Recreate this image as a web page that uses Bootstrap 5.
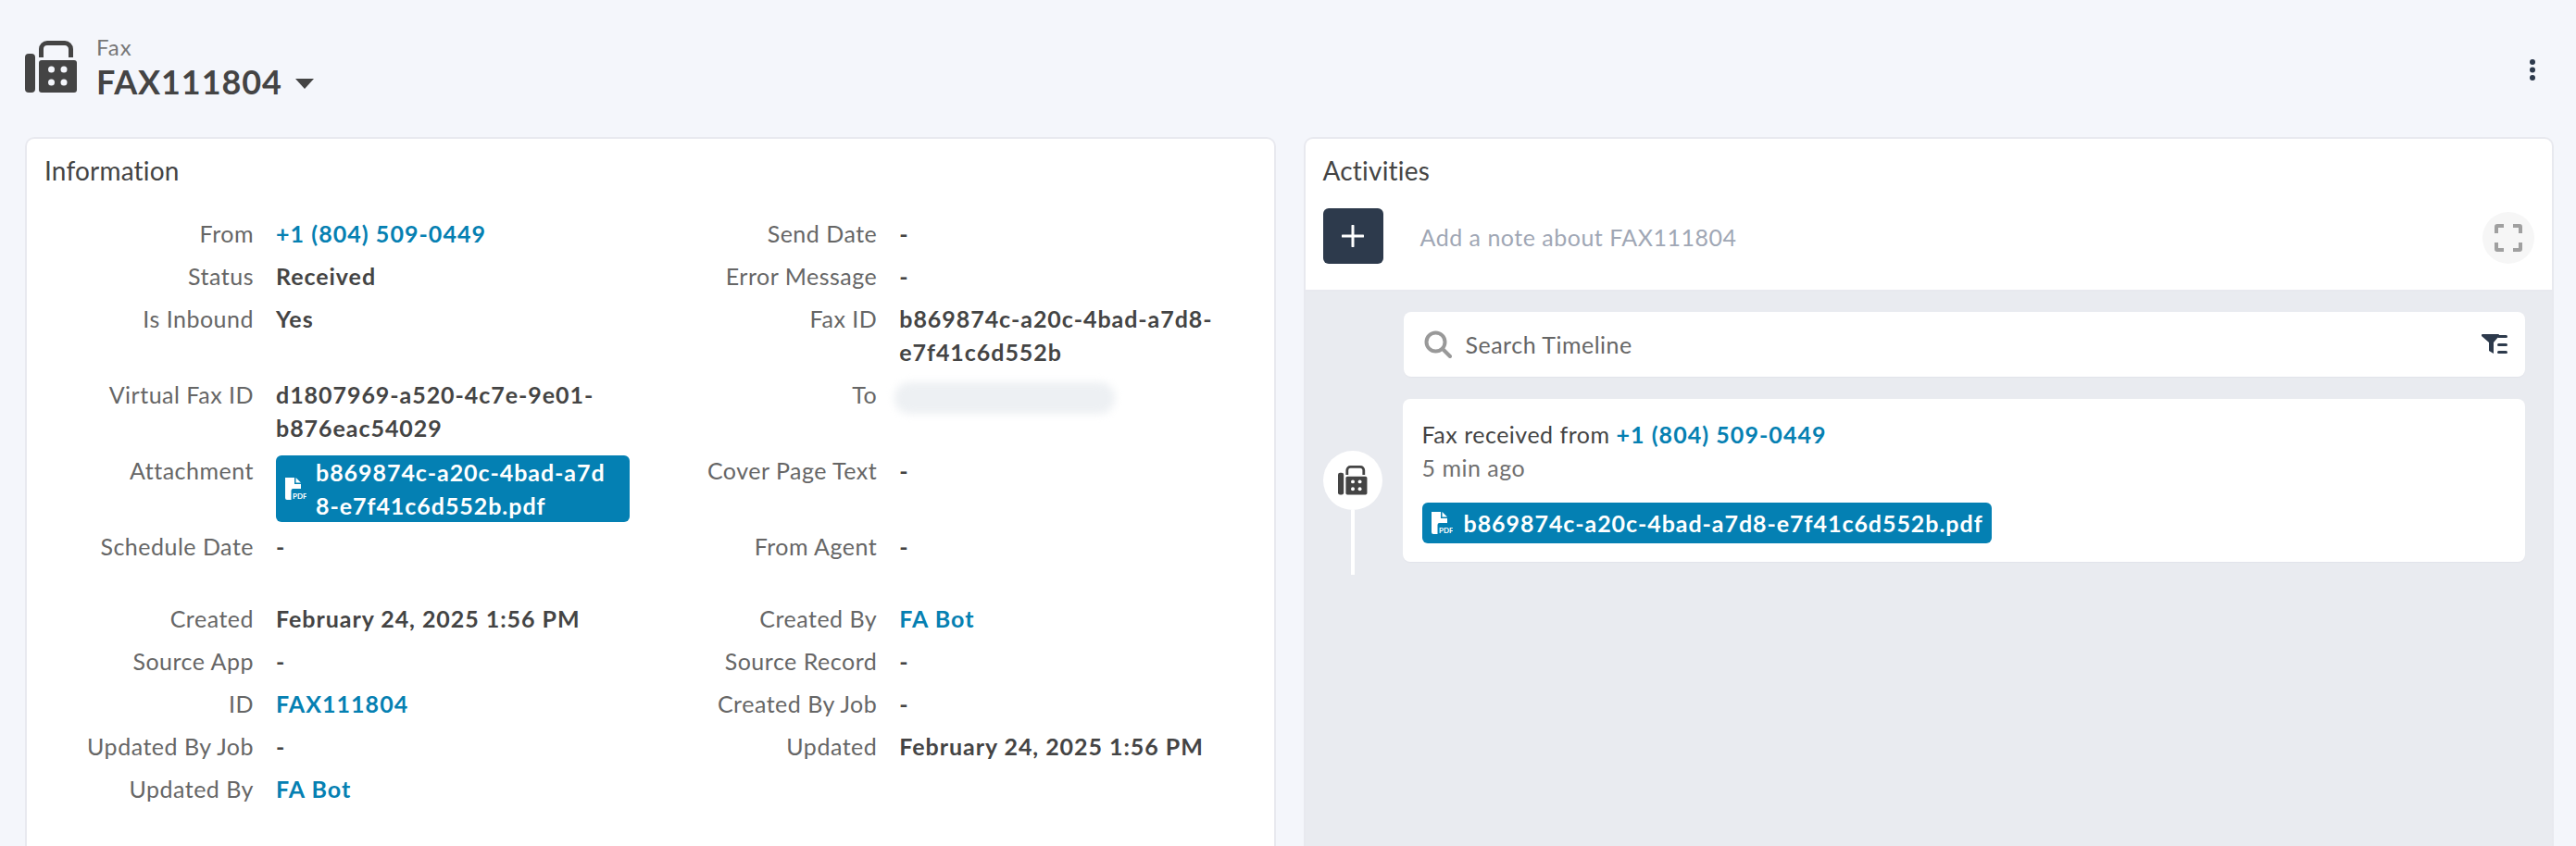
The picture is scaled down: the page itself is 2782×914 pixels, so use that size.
<!DOCTYPE html>
<html lang="en">
<head>
    <meta charset="UTF-8">
    <meta name="viewport" content="width=device-width, initial-scale=1.0">
    <title>FAX111804</title>
    <link href="https://cdn.jsdelivr.net/npm/bootstrap@5.3.0/dist/css/bootstrap.min.css" rel="stylesheet">
    <style>
        html, body { height: 914px; overflow: hidden; }
        body { background: #f4f6fb; color: #444; font-family: Lato, "Liberation Sans", sans-serif; font-size: 25px; line-height: 36px; letter-spacing: .5px; }
        a { color: #0580b2; text-decoration: none; font-weight: 700; letter-spacing: 1.05px; }
        .page-head { height: 148px; padding: 44px 43px 0 27px; }
        .head-icon { width: 57px; height: 57px; flex: none; }
        .head-text { margin-left: 20px; margin-top: -11px; }
        .head-type { font-size: 24px; line-height: 36px; color: #777; letter-spacing: 1px; }
        .head-name { font-size: 36px; line-height: 44px; font-weight: 700; color: #444; letter-spacing: .9px; margin-top: -3px; }
        .head-caret { width: 0; height: 0; border-left: 10px solid transparent; border-right: 10px solid transparent; border-top: 11px solid #444; margin-left: 14px; margin-top: 4px; }
        .kebab { width: 8px; margin-top: 19px; }
        .panels { padding: 0 24px 0 27px; gap: 30px; height: 766px; }
        .panel { flex: 1 1 0; min-width: 0; background: #fff; border: 2px solid #e8e9ef; border-bottom: 0; border-radius: 10px 10px 0 0; overflow: hidden; }
        .panel-title { font-size: 28px; line-height: 36px; color: #444; font-weight: 400; letter-spacing: .2px; }
        .info-head { padding: 16px 0 0 19px; height: 84px; }
        .info-row { margin-bottom: 10px; }
        .info-section { padding-bottom: 32px; }
        .info-label { width: 245px; flex: none; text-align: right; color: #666; }
        .info-value { margin-left: 24px; width: 383px; font-weight: 700; letter-spacing: .95px; overflow-wrap: anywhere; }
        .file-chip { background: #0480b3; color: #fff; border-radius: 6px; font-weight: 700; letter-spacing: .95px; }
        .file-chip svg { flex: none; }
        .chip-big { padding: 0 14px 0 9px; gap: 10px; width: 382px; word-break: break-all; margin: 2px 0 -2px; }
        .chip-small { padding: 0 9px; gap: 12px; height: 44px; line-height: 44px; margin-top: 20px; }
        .blur-box { width: 238px; height: 34px; margin: 5px 0 0 -5px; background: #edf0f3; border-radius: 16px; filter: blur(4px); }
        .note-area { height: 165px; padding: 16px 19px 0 19px; border-bottom: 2px solid #e8e9ef; flex: none; }
        .activities-title { margin-bottom: 23px; }
        .add-btn { width: 65px; height: 60px; background: #2d3a4c; border-radius: 6px; border: 0; padding: 0; }
        .note-text { color: #a0a7b5; margin-left: 40px; margin-top: 2px; }
        .expand-btn { width: 56px; height: 56px; border-radius: 50%; background: #f6f6f6; margin-top: 4px; }
        .timeline { background: #e9ebf0; padding: 22px 29px 0 19px; }
        .rail { width: 65px; flex: none; }
        .rail-dot { width: 64px; height: 64px; border-radius: 50%; background: #fff; margin-top: 150px; }
        .rail-line { width: 4px; height: 70px; background: #fff; }
        .search-box { background: #fff; border-radius: 8px; height: 70px; margin-left: 22px; padding: 0 18px 0 22px; box-shadow: 0 1px 1px #e2e4ea; }
        .search-text { color: #666; margin-left: 15px; }
        .event-card { background: #fff; border-radius: 8px; height: 176px; margin-left: 21px; margin-top: 24px; padding: 20px 21px 0; box-shadow: 0 1px 1px #e2e4ea; }
        .event-time { color: #707070; }
        .pdf-label { font-family: Lato, sans-serif; font-size: 8px; line-height: 1; font-weight: 700; letter-spacing: 0; fill: #fff; }
    </style>
</head>
<body>
    <div class="page-head d-flex">
        <svg class="head-icon" viewBox="0 0 57 57">
            <rect x="0" y="14" width="11" height="42" rx="4" fill="#444"/>
            <rect x="15" y="21" width="41" height="35" rx="3" fill="#444"/>
            <path d="M17.5 18V9a6.500 6.500 0 0 1 6.500-6.500h19a6.500 6.500 0 0 1 6.500 6.500v9" fill="none" stroke="#444" stroke-width="5"/>
            <circle cx="28.500" cy="31" r="3.500" fill="#f4f6fb"/><circle cx="42" cy="31" r="3.500" fill="#f4f6fb"/>
            <circle cx="28.500" cy="45" r="3.500" fill="#f4f6fb"/><circle cx="42" cy="45" r="3.500" fill="#f4f6fb"/>
        </svg>
        <div class="head-text">
            <div class="head-type">Fax</div>
            <div class="head-name d-flex align-items-center">FAX111804<span class="head-caret"></span></div>
        </div>
        <svg class="kebab ms-auto" height="26" viewBox="0 0 8 26" fill="#2d3a4c"><circle cx="4" cy="4" r="3"/><circle cx="4" cy="12.500" r="3"/><circle cx="4" cy="21" r="3"/></svg>
    </div>

    <div class="panels d-flex">
        <div class="panel">
            <div class="info-head"><div class="panel-title">Information</div></div>
            <div class="info-section">
                <div class="row g-0 info-row">
                    <div class="col-6 d-flex"><div class="info-label">From</div><div class="info-value"><a href="#">+1 (804) 509-0449</a></div></div>
                    <div class="col-6 d-flex"><div class="info-label">Send Date</div><div class="info-value">-</div></div>
                </div>
                <div class="row g-0 info-row">
                    <div class="col-6 d-flex"><div class="info-label">Status</div><div class="info-value">Received</div></div>
                    <div class="col-6 d-flex"><div class="info-label">Error Message</div><div class="info-value">-</div></div>
                </div>
                <div class="row g-0 info-row">
                    <div class="col-6 d-flex"><div class="info-label">Is Inbound</div><div class="info-value">Yes</div></div>
                    <div class="col-6 d-flex"><div class="info-label">Fax ID</div><div class="info-value">b869874c-a20c-4bad-a7d8-e7f41c6d552b</div></div>
                </div>
                <div class="row g-0 info-row">
                    <div class="col-6 d-flex"><div class="info-label">Virtual Fax ID</div><div class="info-value">d1807969-a520-4c7e-9e01-b876eac54029</div></div>
                    <div class="col-6 d-flex"><div class="info-label">To</div><div class="info-value"><div class="blur-box"></div></div></div>
                </div>
                <div class="row g-0 info-row">
                    <div class="col-6 d-flex"><div class="info-label">Attachment</div><div class="info-value">
                        <div class="file-chip chip-big d-flex align-items-center">
                            <svg width="24" height="25" viewBox="0 0 24 25"><path d="M1 0h10v7h7v5H9.500a2 2 0 0 0-2 2v10H3a2 2 0 0 1-2-2z" fill="#fff"/><path d="M12.500 0l5.500 5.500h-5.500z" fill="#fff"/><text class="pdf-label" x="9" y="23">PDF</text></svg>
                            <span>b869874c-a20c-4bad-a7d8-e7f41c6d552b.pdf</span>
                        </div>
                    </div></div>
                    <div class="col-6 d-flex"><div class="info-label">Cover Page Text</div><div class="info-value">-</div></div>
                </div>
                <div class="row g-0 info-row">
                    <div class="col-6 d-flex"><div class="info-label">Schedule Date</div><div class="info-value">-</div></div>
                    <div class="col-6 d-flex"><div class="info-label">From Agent</div><div class="info-value">-</div></div>
                </div>
            </div>
            <div>
                <div class="row g-0 info-row">
                    <div class="col-6 d-flex"><div class="info-label">Created</div><div class="info-value">February 24, 2025 1:56 PM</div></div>
                    <div class="col-6 d-flex"><div class="info-label">Created By</div><div class="info-value"><a href="#">FA Bot</a></div></div>
                </div>
                <div class="row g-0 info-row">
                    <div class="col-6 d-flex"><div class="info-label">Source App</div><div class="info-value">-</div></div>
                    <div class="col-6 d-flex"><div class="info-label">Source Record</div><div class="info-value">-</div></div>
                </div>
                <div class="row g-0 info-row">
                    <div class="col-6 d-flex"><div class="info-label">ID</div><div class="info-value"><a href="#">FAX111804</a></div></div>
                    <div class="col-6 d-flex"><div class="info-label">Created By Job</div><div class="info-value">-</div></div>
                </div>
                <div class="row g-0 info-row">
                    <div class="col-6 d-flex"><div class="info-label">Updated By Job</div><div class="info-value">-</div></div>
                    <div class="col-6 d-flex"><div class="info-label">Updated</div><div class="info-value">February 24, 2025 1:56 PM</div></div>
                </div>
                <div class="row g-0 info-row">
                    <div class="col-6 d-flex"><div class="info-label">Updated By</div><div class="info-value"><a href="#">FA Bot</a></div></div>
                </div>
            </div>
        </div>

        <div class="panel d-flex flex-column">
            <div class="note-area">
                <div class="panel-title activities-title">Activities</div>
                <div class="d-flex align-items-center">
                    <button class="add-btn d-flex align-items-center justify-content-center" type="button">
                        <svg width="24" height="24" viewBox="0 0 24 24"><path d="M12 1v22M1 12h22" stroke="#fff" stroke-width="3" stroke-linecap="round"/></svg>
                    </button>
                    <div class="note-text">Add a note about FAX111804</div>
                    <div class="expand-btn ms-auto d-flex align-items-center justify-content-center">
                        <svg width="30" height="30" viewBox="0 0 30 30" fill="none" stroke="#a0a0a0" stroke-width="4"><path d="M2 10V3a1 1 0 0 1 1-1h7M20 2h7a1 1 0 0 1 1 1v7M28 20v7a1 1 0 0 1-1 1h-7M10 28H3a1 1 0 0 1-1-1v-7"/></svg>
                    </div>
                </div>
            </div>
            <div class="timeline flex-grow-1 d-flex">
                <div class="rail d-flex flex-column align-items-center">
                    <div class="rail-dot d-flex align-items-center justify-content-center flex-shrink-0">
                        <svg width="32" height="32" viewBox="0 0 57 57">
                            <rect x="0" y="14" width="11" height="42" rx="4" fill="#444"/>
                            <rect x="15" y="21" width="41" height="35" rx="3" fill="#444"/>
                            <path d="M17.5 18V9a6.500 6.500 0 0 1 6.500-6.500h19a6.500 6.500 0 0 1 6.500 6.500v9" fill="none" stroke="#444" stroke-width="5"/>
                            <circle cx="28.500" cy="31" r="3.500" fill="#fff"/><circle cx="42" cy="31" r="3.500" fill="#fff"/>
                            <circle cx="28.500" cy="45" r="3.500" fill="#fff"/><circle cx="42" cy="45" r="3.500" fill="#fff"/>
                        </svg>
                    </div>
                    <div class="rail-line"></div>
                </div>
                <div class="flex-grow-1">
                    <div class="search-box d-flex align-items-center">
                        <svg width="30" height="30" viewBox="0 0 30 30" fill="none" stroke="#999" stroke-width="4"><circle cx="12.500" cy="12.500" r="10"/><path d="M20 20l8 8" stroke-linecap="round"/></svg>
                        <div class="search-text">Search Timeline</div>
                        <svg class="ms-auto" width="29" height="22" viewBox="0 0 29 22" fill="#2d3a4c"><path d="M0 1a1 1 0 0 1 1-1h17a1 1 0 0 1 1 1v1l-6 7v12l-5-3V9L0 2z"/><rect x="17" y="1" width="11" height="3" rx="1.500"/><rect x="17" y="10" width="11" height="3" rx="1.500"/><rect x="17" y="18" width="11" height="3" rx="1.500"/></svg>
                    </div>
                    <div class="event-card">
                        <div>Fax received from <a href="#">+1 (804) 509-0449</a></div>
                        <div class="event-time">5 min ago</div>
                        <div class="file-chip chip-small d-inline-flex align-items-center">
                            <svg width="24" height="25" viewBox="0 0 24 25"><path d="M1 0h10v7h7v5H9.500a2 2 0 0 0-2 2v10H3a2 2 0 0 1-2-2z" fill="#fff"/><path d="M12.500 0l5.500 5.500h-5.500z" fill="#fff"/><text class="pdf-label" x="9" y="23">PDF</text></svg>
                            <span>b869874c-a20c-4bad-a7d8-e7f41c6d552b.pdf</span>
                        </div>
                    </div>
                </div>
            </div>
        </div>
    </div>
    <script src="https://cdn.jsdelivr.net/npm/bootstrap@5.3.0/dist/js/bootstrap.bundle.min.js"></script>
</body>
</html>
